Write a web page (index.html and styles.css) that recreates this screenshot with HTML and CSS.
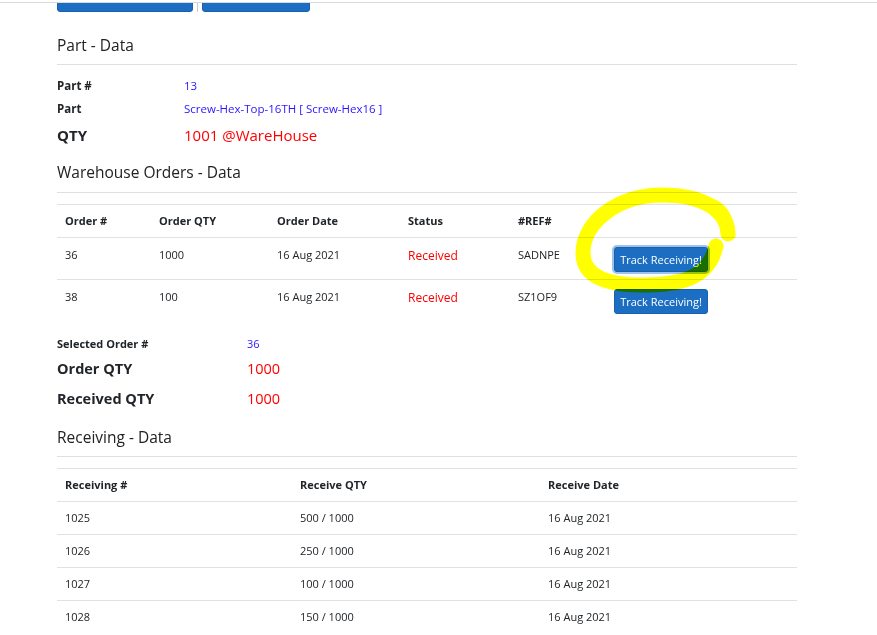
FILE: index.html
```html
<!DOCTYPE html>
<html lang="en">
<head>
<meta charset="utf-8">
<title>Part - Data</title>
<link rel="stylesheet" href="styles.css">
</head>
<body>
<div class="top-bar"></div>
<main class="content">
  <div class="btn-strip">
    <button class="btn btn-primary btn-first">Back to Warehouse Orders</button>
    <span class="sep">|</span>
    <button class="btn btn-primary btn-second">Back to Part Data</button>
  </div>

  <h4 class="section-title first-title">Part - Data</h4>
  <hr class="rule">
  <div class="info info-part">
    <div class="info-row small-row"><span class="lbl">Part #</span><span class="val-blue">13</span></div>
    <div class="info-row small-row"><span class="lbl">Part</span><span class="val-blue">Screw-Hex-Top-16TH [ Screw-Hex16 ]</span></div>
    <div class="info-row big-row"><span class="lbl">QTY</span><span class="val-red">1001 @WareHouse</span></div>
  </div>

  <h4 class="section-title">Warehouse Orders - Data</h4>
  <hr class="rule">
  <table class="grid orders">
    <thead>
      <tr>
        <th class="c-order">Order #</th>
        <th class="c-qty">Order QTY</th>
        <th class="c-date">Order Date</th>
        <th class="c-status">Status</th>
        <th class="c-ref">#REF#</th>
        <th></th>
      </tr>
    </thead>
    <tbody>
      <tr>
        <td>36</td><td>1000</td><td>16 Aug 2021</td><td class="status">Received</td><td>SADNPE</td>
        <td><button class="btn btn-primary btn-track focused">Track Receiving!</button></td>
      </tr>
      <tr>
        <td>38</td><td>100</td><td>16 Aug 2021</td><td class="status">Received</td><td>SZ1OF9</td>
        <td><button class="btn btn-primary btn-track">Track Receiving!</button></td>
      </tr>
    </tbody>
  </table>

  <div class="info info-selected">
    <div class="info-row sel-row"><span class="lbl">Selected Order #</span><span class="val-blue">36</span></div>
    <div class="info-row mid-row"><span class="lbl">Order QTY</span><span class="val-red">1000</span></div>
    <div class="info-row mid-row"><span class="lbl">Received QTY</span><span class="val-red">1000</span></div>
  </div>

  <h4 class="section-title receiving-title">Receiving - Data</h4>
  <hr class="rule">
  <table class="grid receiving">
    <thead>
      <tr><th class="r-num">Receiving #</th><th class="r-qty">Receive QTY</th><th>Receive Date</th></tr>
    </thead>
    <tbody>
      <tr><td>1025</td><td>500 / 1000</td><td>16 Aug 2021</td></tr>
      <tr><td>1026</td><td>250 / 1000</td><td>16 Aug 2021</td></tr>
      <tr><td>1027</td><td>100 / 1000</td><td>16 Aug 2021</td></tr>
      <tr><td>1028</td><td>150 / 1000</td><td>16 Aug 2021</td></tr>
    </tbody>
  </table>
</main>

<svg class="scribble" width="877" height="635" viewBox="0 0 877 635" aria-hidden="true">
  <path d="M 728 234 C 727 210, 703 195, 662 195 C 618 195, 583 222, 583 253 C 583 279, 612 285, 642 285 C 684 285, 709 277, 716 246" fill="none" stroke="#ffff00" stroke-width="15" stroke-linecap="round" stroke-linejoin="round"/>
  <path d="M 713 203 C 726 210, 731 222, 731 238" fill="none" stroke="#ffff00" stroke-width="9" stroke-linecap="butt"/>
</svg>
</body>
</html>
```

FILE: styles.css
```css
html, body {
  margin: 0;
  padding: 0;
  background: #fff;
}

body {
  position: relative;
  width: 877px;
  height: 635px;
  overflow: hidden;
  font-family: "Open Sans", "Noto Sans", sans-serif;
  color: #212529;
}

.top-bar {
  height: 2px;
  border-bottom: 1px solid #d9d9d9;
}

.content {
  margin-left: 57px;
  width: 740px;
}

/* clipped (scrolled) button row */
.btn-strip {
  height: 9px;
  overflow: hidden;
  display: flex;
  align-items: flex-end;
}

.btn {
  font-family: inherit;
  border-radius: 3px;
  cursor: pointer;
  white-space: nowrap;
}

.btn-primary {
  background: #1b6ec2;
  border: 1px solid #1861ac;
  color: #fff;
}

.btn-strip .btn {
  height: 25px;
  font-size: 11px;
  padding: 0 6px 5px;
  line-height: 18px;
  flex: none;
  overflow: hidden;
  color: #c9dcf2;
}

.btn-first { width: 136px; }
.btn-second { width: 108px; }

.sep {
  width: 9px;
  text-align: center;
  color: #bbb;
  font-size: 11px;
  line-height: 10px;
  align-self: flex-end;
}

.section-title {
  font-size: 15.5px;
  font-weight: 400;
  line-height: 24px;
  margin: 10px 0 8px;
  color: #222;
}

.first-title {
  margin-top: 21px;
  margin-bottom: 7px;
}

.receiving-title {
  margin-top: 12px;
  margin-bottom: 7px;
}

.rule {
  border: 0;
  border-top: 1px solid #dfdfdf;
  margin: 0;
}

.info {
  display: flex;
  flex-direction: column;
}

.info-row {
  display: flex;
  align-items: center;
}

.lbl {
  font-weight: 700;
  color: #212529;
  flex: none;
}

.info-part {
  margin-top: 9px;
}

.info-part .lbl { width: 127px; }
.info-selected .lbl { width: 190px; }

.small-row {
  height: 23px;
  font-size: 11.5px;
}

.big-row {
  height: 30px;
  font-size: 15px;
}

.val-blue { color: #2a14ff; }
.val-red { color: #ff0000; }

.grid {
  width: 740px;
  border-collapse: collapse;
  table-layout: fixed;
  font-size: 11px;
}

.grid th,
.grid td {
  text-align: left;
  vertical-align: top;
  border-top: 1px solid #dee2e6;
  padding: 0 8px;
}

.grid th {
  height: 32px;
  line-height: 32px;
  font-weight: 700;
}

.orders {
  margin-top: 11px;
}

.orders td {
  height: 42px;
  padding-top: 10px;
  line-height: 13px;
  box-sizing: border-box;
}

.orders td.status {
  color: #ff0000;
  font-size: 12px;
  padding-top: 11px;
}

.c-order { width: 78px; }
.c-qty { width: 102px; }
.c-date { width: 115px; }
.c-status { width: 94px; }
.c-ref { width: 80px; }

.btn-track {
  font-size: 11px;
  height: 25px;
  width: 94px;
  padding: 0;
  line-height: 23px;
  margin-top: -1px;
}

.btn-track.focused {
  box-shadow: 0 0 0 2px #9cc3ee;
}

.info-selected {
  margin-top: 11px;
}

.sel-row {
  height: 21px;
  font-size: 11px;
}

.mid-row {
  height: 29px;
  font-size: 14.5px;
}

.mid-row + .mid-row {
  margin-top: 1px;
}

.receiving {
  margin-top: 11px;
}

.receiving td {
  height: 32px;
  line-height: 32px;
}

.r-num { width: 219px; }
.r-qty { width: 232px; }

.scribble {
  position: absolute;
  left: 0;
  top: 0;
  pointer-events: none;
  mix-blend-mode: multiply;
}
```
